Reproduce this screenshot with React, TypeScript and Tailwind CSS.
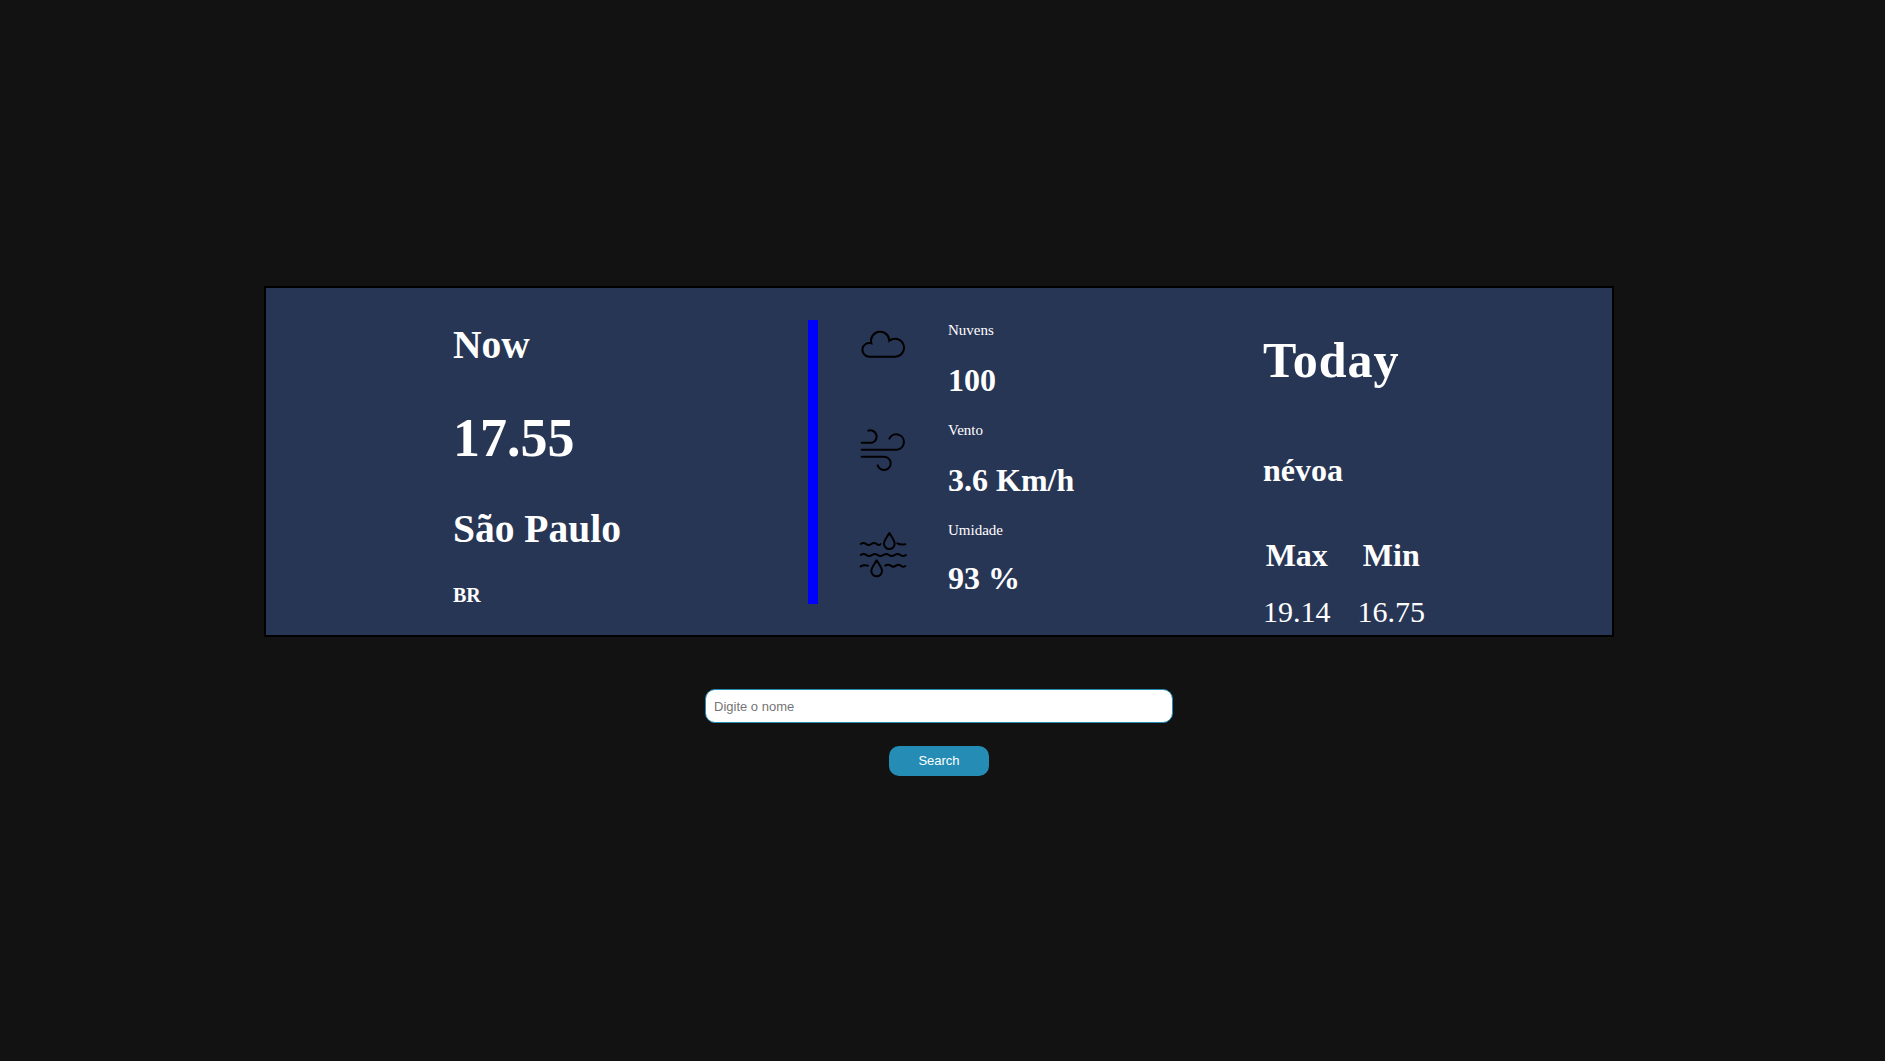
import React, { useState } from 'react';

function CloudIcon() {
  return (
    <svg viewBox="0 0 210 180" width="70" height="60" fill="none" stroke="#000" strokeWidth="6" strokeLinecap="round">
      <path d="M57 110H136A27 27 0 1 0 118 62A27.5 27.5 0 1 0 64 70A20.5 20.5 0 1 0 57 110Z" />
    </svg>
  );
}

function WindIcon() {
  return (
    <svg viewBox="0 0 210 180" width="70" height="60" fill="none" stroke="#000" strokeWidth="6" strokeLinecap="round">
      <path d="M55 32A18 18 0 0 1 67 68H35" />
      <path d="M35 89H140A23 23 0 1 0 118 56" />
      <path d="M35 110H101A20 20 0 1 1 83 136" />
    </svg>
  );
}

function WaterIcon() {
  return (
    <svg viewBox="0 0 210 180" width="70" height="60" fill="none" stroke="#000" strokeWidth="6" strokeLinecap="round" strokeLinejoin="round">
      <path d="M118 24C110 38 102 46 102 56a16 16 0 0 0 32 0C134 46 126 38 118 24Z" />
      <path d="M80 106C72 120 64 128 64 138a16 16 0 0 0 32 0C96 128 88 120 80 106Z" />
      <path d="M32 57q8-6 16 0t16 0t16 0t12 0" />
      <path d="M142 55q8 5 24 3" />
      <path d="M32 90q9-6 17 0t17 0t17 0t17 0t17 0t17 0t17 0t17 0" />
      <path d="M32 124q9-6 22-2" />
      <path d="M106 122q8-6 16 0t16 0t14 0t14 1" />
    </svg>
  );
}

const stats = [
  { label: 'Nuvens', value: '100', icon: <CloudIcon />, iconClass: 'mt-[-1px]', gap: 'mt-[22px]' },
  { label: 'Vento', value: '3.6 Km/h', icon: <WindIcon />, iconClass: 'mt-[-1px]', gap: 'mt-[22px]' },
  { label: 'Umidade', value: '93 %', icon: <WaterIcon />, iconClass: 'mt-[4px]', gap: 'mt-[20px]' },
];

export default function App() {
  const [city, setCity] = useState('');

  return (
    <div className="min-h-screen bg-[#121212] pr-[7px] flex flex-col items-center justify-center font-['Liberation_Serif',serif] text-white">
      <div className="w-[1350px] h-[351px] bg-[#283655] border-2 border-black flex pl-[187px] pt-[32px]">
        <div className="w-[355px] pt-[2px] flex flex-col">
          <h2 className="text-[39.5px] leading-[46px] font-bold">Now</h2>
          <h1 className="mt-[39px] text-[54px] leading-[62px] font-bold">17.55</h1>
          <h2 className="mt-[37px] text-[39.5px] leading-[46px] font-bold">São Paulo</h2>
          <h3 className="mt-[32px] text-[20px] leading-[23px] font-bold">BR</h3>
        </div>

        <div className="w-[10px] h-[284px] bg-[#0000ff]"></div>

        <div className="w-[445px] pl-[32px] pt-[1px] flex flex-col">
          {stats.map((stat) => (
            <div key={stat.label} className="h-[100px] flex">
              <div className={`w-[98px] ${stat.iconClass}`}>{stat.icon}</div>
              <div>
                <p className="text-[15px] leading-[18px]">{stat.label}</p>
                <p className={`${stat.gap} text-[32px] leading-[38px] font-bold`}>{stat.value}</p>
              </div>
            </div>
          ))}
        </div>

        <div className="pt-[11px] flex flex-col">
          <h1 className="text-[50px] leading-[58px] font-bold tracking-[1px]">Today</h1>
          <h2 className="mt-[62px] text-[32px] leading-[38px] font-bold">névoa</h2>
          <div className="mt-[47px] flex gap-[27px]">
            <div className="flex flex-col items-center">
              <span className="text-[32px] leading-[38px] font-bold">Max</span>
              <span className="mt-[21px] text-[30px] leading-[34px]">19.14</span>
            </div>
            <div className="flex flex-col items-center">
              <span className="text-[32px] leading-[38px] font-bold">Min</span>
              <span className="mt-[21px] text-[30px] leading-[34px]">16.75</span>
            </div>
          </div>
        </div>
      </div>

      <input
        type="text"
        value={city}
        onChange={(e) => setCity(e.target.value)}
        placeholder="Digite o nome"
        className="mt-[52px] w-[468px] h-[34px] px-[8px] pt-[2px] bg-white rounded-[10px] border border-[#258db5] text-[13px] text-black font-['Liberation_Sans',sans-serif] placeholder:text-[#757575] outline-none"
      />
      <button className="mt-[23px] w-[100px] h-[30px] pt-[1px] bg-[#258db5] rounded-[10px] text-[13px] text-white font-['Liberation_Sans',sans-serif]">
        Search
      </button>
    </div>
  );
}
